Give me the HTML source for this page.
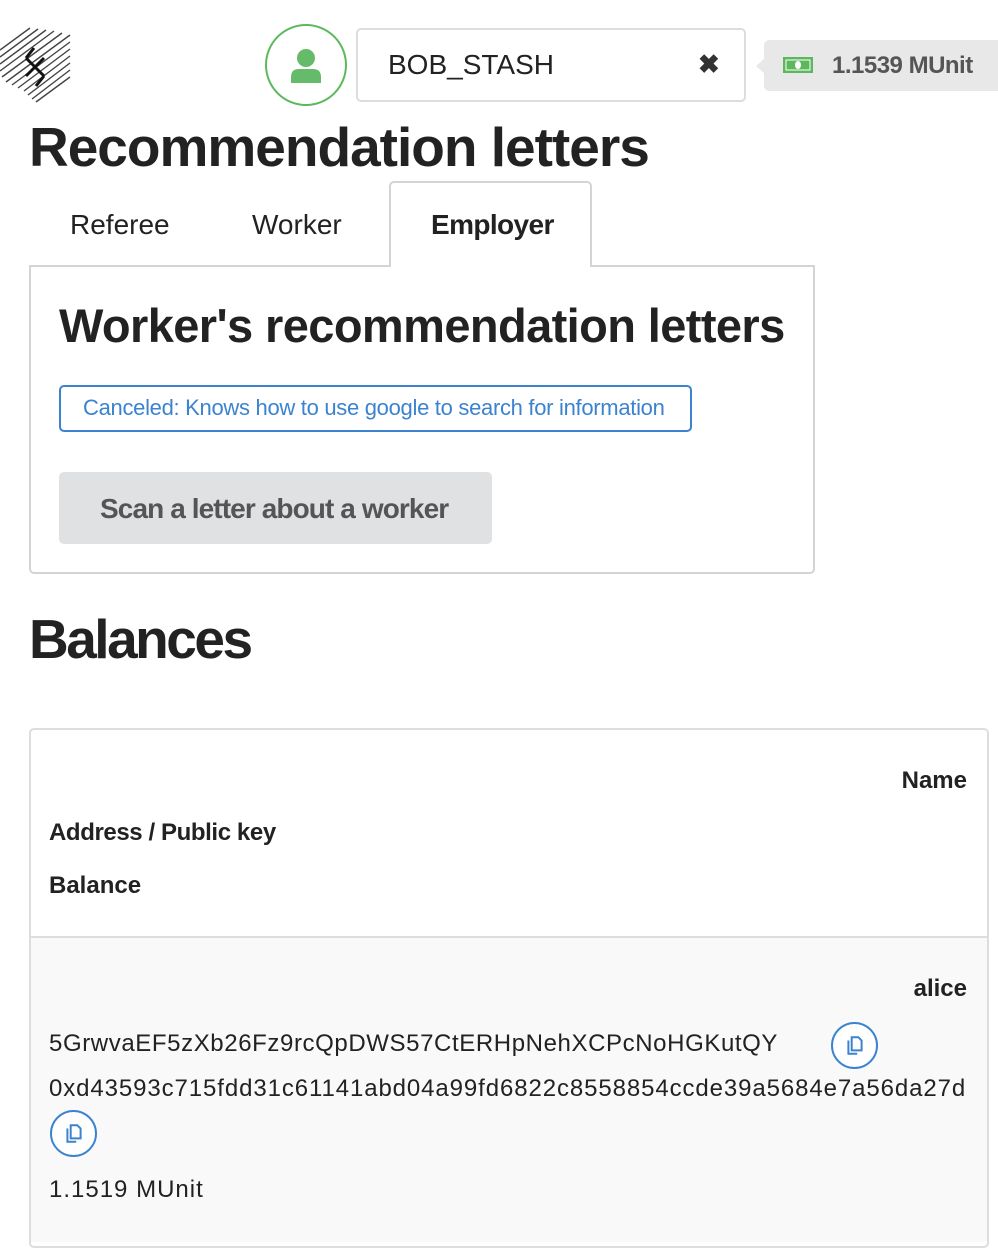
<!DOCTYPE html>
<html><head><meta charset="utf-8"><style>
*{margin:0;padding:0;box-sizing:border-box}
body{width:998px;height:1242px;background:#fff;font-family:"Liberation Sans",sans-serif;color:#222;position:relative;overflow:hidden}
.a{position:absolute;white-space:nowrap}
h1{font-weight:bold;font-size:55px;letter-spacing:-1px;color:#222}
.copy{position:absolute;width:47px;height:47px;border:2px solid #3b83d0;border-radius:50%;background:#fff}
.copy svg{position:absolute;left:11px;top:11px}
</style></head><body>
<svg class="a" style="left:0;top:24px" width="72" height="80" viewBox="0 0 72 80">
<g stroke="#444" stroke-width="1.4">
<line x1="0" y1="26" x2="30" y2="4"/><line x1="0" y1="33" x2="38" y2="5"/><line x1="0" y1="40" x2="46" y2="6"/><line x1="0" y1="47" x2="54" y2="7"/><line x1="2" y1="53" x2="62" y2="9"/><line x1="6" y1="58" x2="70" y2="11"/><line x1="12" y1="61" x2="70" y2="18"/><line x1="18" y1="64" x2="70" y2="25"/><line x1="24" y1="67" x2="70" y2="32"/><line x1="28" y1="71" x2="70" y2="39"/><line x1="32" y1="75" x2="70" y2="46"/><line x1="36" y1="78" x2="70" y2="53"/>
</g>
<path d="M26 34 L44 52 M44 34 L26 52 M26 34 L34 24 M44 52 L36 62" stroke="#111" stroke-width="3" fill="none"/>
</svg>
<div class="a" style="left:265px;top:24px;width:82px;height:82px;border:2px solid #5cb85c;border-radius:50%"></div>
<svg class="a" style="left:289px;top:47px" width="34" height="36" viewBox="0 0 34 36"><circle cx="17" cy="11" r="9" fill="#66bb6a"/><path d="M2 36 V30 Q2 22 10 22 H24 Q32 22 32 30 V36Z" fill="#66bb6a"/></svg>
<div class="a" style="left:356px;top:28px;width:390px;height:74px;border:2px solid #ddd;border-radius:5px"></div>
<div class="a" style="left:388px;top:49px;font-size:28px;color:#222">BOB_STASH</div>
<div class="a" style="left:698px;top:49px;font-size:26px;font-weight:bold;color:#333">✖</div>
<div class="a" style="left:764px;top:40px;width:234px;height:51px;background:#e8e8e8;border-radius:5px 0 0 5px"></div>
<div class="a" style="left:756px;top:58px;width:0;height:0;border-top:8px solid transparent;border-bottom:8px solid transparent;border-right:9px solid #e8e8e8"></div>
<svg class="a" style="left:783px;top:57px" width="30" height="16"><rect width="30" height="16" fill="#5cb85c"/><rect x="3" y="3" width="24" height="10" fill="none" stroke="#fff" stroke-width="1"/><ellipse cx="15" cy="8" rx="3" ry="4" fill="#fff"/></svg>
<div class="a" style="left:832px;top:52px;font-size:24px;font-weight:bold;color:#555;letter-spacing:-0.5px">1.1539 MUnit</div>

<h1 class="a" style="left:29px;top:115px">Recommendation letters</h1>

<div class="a" style="left:70px;top:209px;font-size:28px">Referee</div>
<div class="a" style="left:252px;top:209px;font-size:28px">Worker</div>
<div class="a" style="left:389px;top:181px;width:203px;height:86px;border:2px solid #d4d4d5;border-bottom:none;border-radius:5px 5px 0 0;background:#fff;z-index:2"></div>
<div class="a" style="left:431px;top:209px;font-size:28px;font-weight:bold;letter-spacing:-0.6px;z-index:3">Employer</div>
<div class="a" style="left:29px;top:265px;width:786px;height:309px;border:2px solid #d4d4d5;border-radius:0 0 5px 5px"></div>
<div class="a" style="left:59px;top:298px;font-size:47px;font-weight:bold;letter-spacing:-0.6px">Worker's recommendation letters</div>
<div class="a" style="left:59px;top:385px;width:633px;height:47px;border:2px solid #3b83d0;border-radius:5px"></div>
<div class="a" style="left:83px;top:395px;font-size:22px;color:#3b83d0;letter-spacing:-0.3px">Canceled: Knows how to use google to search for information</div>
<div class="a" style="left:59px;top:472px;width:433px;height:72px;background:#e0e1e2;border-radius:5px"></div>
<div class="a" style="left:100px;top:493px;font-size:28px;font-weight:bold;color:#555;letter-spacing:-0.9px">Scan a letter about a worker</div>

<h1 class="a" style="left:29px;top:607px;letter-spacing:-2.5px">Balances</h1>

<div class="a" style="left:29px;top:728px;width:960px;height:520px;border:2px solid #ddd;border-radius:5px"></div>
<div class="a" style="left:31px;top:936px;width:956px;height:306px;background:#f9f9f9;border-top:2px solid #ddd"></div>
<div class="a" style="right:31px;top:767px;font-size:24px;font-weight:bold">Name</div>
<div class="a" style="left:49px;top:819px;font-size:24px;font-weight:bold;letter-spacing:-0.4px">Address / Public key</div>
<div class="a" style="left:49px;top:872px;font-size:24px;font-weight:bold">Balance</div>
<div class="a" style="right:31px;top:975px;font-size:24px;font-weight:bold">alice</div>
<div class="a" style="left:49px;top:1030px;font-size:24px;letter-spacing:0.6px">5GrwvaEF5zXb26Fz9rcQpDWS57CtERHpNehXCPcNoHGKutQY</div>
<div class="copy" style="left:831px;top:1022px"><svg width="22" height="22" viewBox="0 0 20 20" fill="none" stroke="#3b83d0" stroke-width="1.8"><path d="M7 2 H13 L16 5 V14 H7Z"/><path d="M4 5 V17 H12"/></svg></div>
<div class="a" style="left:49px;top:1075px;font-size:24px;letter-spacing:0.9px">0xd43593c715fdd31c61141abd04a99fd6822c8558854ccde39a5684e7a56da27d</div>
<div class="copy" style="left:50px;top:1110px"><svg width="22" height="22" viewBox="0 0 20 20" fill="none" stroke="#3b83d0" stroke-width="1.8"><path d="M7 2 H13 L16 5 V14 H7Z"/><path d="M4 5 V17 H12"/></svg></div>
<div class="a" style="left:49px;top:1176px;font-size:24px;letter-spacing:1px">1.1519 MUnit</div>
</body></html>
